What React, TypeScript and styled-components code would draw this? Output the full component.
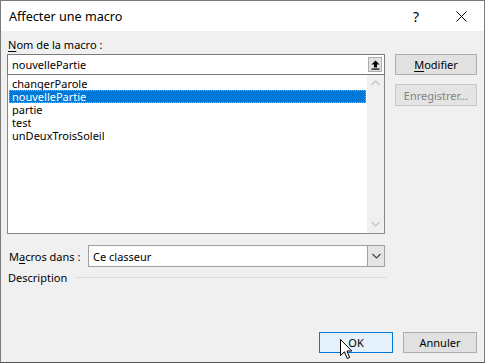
import React from "react";
import styled, { createGlobalStyle } from "styled-components";

const Global = createGlobalStyle`
  html, body { margin: 0; padding: 0; background: #f0f0f0; }
  body { font-family: "Noto Sans", "Open Sans", sans-serif; font-size: 11px; color: #000; }
  * { box-sizing: border-box; }
`;

const Window = styled.div`
  position: relative;
  width: 485px;
  height: 363px;
  border: 1px solid #7a7a7a;
  border-bottom-color: #555;
  background: #f0f0f0;
  display: flex;
  flex-direction: column;
  overflow: hidden;
`;

const TitleBar = styled.div`
  height: 30px;
  background: #fff;
  display: flex;
  align-items: center;
  padding-left: 8px;
  flex-shrink: 0;
`;

const Title = styled.div`
  flex: 1;
  font-size: 12.6px;
  padding-top: 1px;
`;

const TitleButton = styled.div<{ $w: number; $mr?: number }>`
  width: ${(p) => p.$w}px;
  margin-right: ${(p) => p.$mr ?? 0}px;
  height: 30px;
  display: flex;
  align-items: center;
  justify-content: center;
  font-size: 14px;
  color: #000;
`;

const Body = styled.div`
  flex: 1;
  display: flex;
  flex-direction: column;
  padding: 6px 7px 9px 6px;
`;

const Main = styled.div`
  display: flex;
  gap: 10px;
`;

const LeftCol = styled.div`
  width: 378px;
  display: flex;
  flex-direction: column;
`;

const RightCol = styled.div`
  width: 82px;
  display: flex;
  flex-direction: column;
  padding-top: 17px;
  gap: 9px;
`;

const Label = styled.div`
  height: 16px;
  line-height: 16px;
  margin-bottom: 1px;
  padding-left: 1px;
`;

const U = styled.span`
  text-decoration: underline;
  text-underline-offset: 2px;
  text-decoration-thickness: 1px;
`;

const NameField = styled.div`
  height: 21px;
  background: #fff;
  border: 1px solid #7a7a7a;
  display: flex;
  align-items: center;
  padding-left: 4px;
`;

const NameText = styled.div`
  flex: 1;
`;

const RefButton = styled.div`
  width: 14px;
  height: 15px;
  margin-right: 2px;
  background: #e1e1e1;
  border: 1px solid #adadad;
  display: flex;
  align-items: center;
  justify-content: center;
`;

const ListBox = styled.div`
  height: 159px;
  background: #fff;
  border: 1px solid #828790;
  border-top: none;
  display: flex;
`;

const ListItems = styled.div`
  flex: 1;
  padding-top: 2px;
  padding-left: 1px;
`;

const Item = styled.div<{ $sel?: boolean }>`
  height: 13px;
  padding-left: 3px;
  margin-right: 1px;
  background: ${(p) => (p.$sel ? "#0078d7" : "transparent")};
  color: ${(p) => (p.$sel ? "#fff" : "#000")};
  outline: ${(p) => (p.$sel ? "1px dotted #7fb7e8" : "none")};
  outline-offset: -1px;
`;

const ItemText = styled.span`
  display: inline-block;
  height: 13px;
  line-height: 13px;
  overflow: hidden;
  vertical-align: top;
`;

const ScrollBar = styled.div`
  width: 17px;
  background: #f0f0f0;
  display: flex;
  flex-direction: column;
  justify-content: space-between;
  align-items: center;
  padding: 5px 0 6px;
`;

const Button = styled.div<{ $disabled?: boolean; $default?: boolean }>`
  height: ${(p) => (p.$disabled ? 22 : 21)}px;
  display: flex;
  align-items: center;
  justify-content: center;
  background: ${(p) => (p.$default ? "#e5f1fb" : p.$disabled ? "#e4e4e4" : "#e1e1e1")};
  border: 1px solid ${(p) => (p.$default ? "#0078d7" : p.$disabled ? "#c8c8c8" : "#adadad")};
  color: ${(p) => (p.$disabled ? "#838383" : "#000")};
`;

const MacrosRow = styled.div`
  display: flex;
  align-items: center;
  margin-top: 11px;
  height: 22px;
`;

const MacrosLabel = styled.div`
  width: 81px;
  padding-left: 2px;
`;

const Select = styled.div`
  flex: 1;
  height: 22px;
  background: #fff;
  border: 1px solid #a0a0a0;
  display: flex;
  align-items: center;
  padding-left: 4px;
`;

const SelectText = styled.div`
  flex: 1;
`;

const DropButton = styled.div`
  width: 17px;
  height: 20px;
  background: #e5e5e5;
  border-left: 1px solid #a0a0a0;
  display: flex;
  align-items: center;
  justify-content: center;
`;

const DescRow = styled.div`
  display: flex;
  align-items: center;
  margin-top: 2px;
  height: 16px;
  padding-left: 1px;
  gap: 8px;
`;

const DescLine = styled.div`
  flex: 1;
  height: 1px;
  background: #dcdcdc;
  margin-right: -2px;
`;

const Footer = styled.div`
  margin-top: auto;
  display: flex;
  justify-content: flex-end;
  gap: 10px;
`;

const FooterButton = styled(Button)`
  width: 74px;
`;

const Cursor = styled.svg`
  position: absolute;
  left: 339px;
  top: 338px;
`;

const Chevron = ({ up, color }: { up?: boolean; color: string }) => (
  <svg width="9" height="6" viewBox="0 0 9 6">
    <polyline
      points={up ? "0.5,5 4.5,1 8.5,5" : "0.5,1 4.5,5 8.5,1"}
      fill="none"
      stroke={color}
      strokeWidth="1.1"
    />
  </svg>
);

export default function App() {
  const items = ["changerParole", "nouvellePartie", "partie", "test", "unDeuxTroisSoleil"];
  return (
    <>
      <Global />
      <Window>
        <TitleBar>
          <Title>Affecter une macro</Title>
          <TitleButton $w={24} $mr={10}>?</TitleButton>
          <TitleButton $w={46}>
            <svg width="11" height="11" viewBox="0 0 11 11">
              <path d="M0.5 0.5 L10.5 10.5 M10.5 0.5 L0.5 10.5" stroke="#000" strokeWidth="1" />
            </svg>
          </TitleButton>
        </TitleBar>
        <Body>
          <Main>
            <LeftCol>
              <Label>
                <U>N</U>om de la macro :
              </Label>
              <NameField>
                <NameText>nouvellePartie</NameText>
                <RefButton>
                  <svg width="9" height="10" viewBox="0 0 9 10">
                    <path d="M4.5 0.5 L8.5 4.5 L6 4.5 L6 7.5 L3 7.5 L3 4.5 L0.5 4.5 Z" fill="#000" />
                    <rect x="0.5" y="8.5" width="8" height="1.2" fill="#000" />
                  </svg>
                </RefButton>
              </NameField>
              <ListBox>
                <ListItems>
                  {items.map((it) => (
                    <Item key={it} $sel={it === "nouvellePartie"}>
                      <ItemText>{it}</ItemText>
                    </Item>
                  ))}
                </ListItems>
                <ScrollBar>
                  <Chevron up color="#c2c2c2" />
                  <Chevron color="#c2c2c2" />
                </ScrollBar>
              </ListBox>
              <MacrosRow>
                <MacrosLabel>
                  M<U>a</U>cros dans :
                </MacrosLabel>
                <Select>
                  <SelectText>Ce classeur</SelectText>
                  <DropButton>
                    <Chevron color="#404040" />
                  </DropButton>
                </Select>
              </MacrosRow>
              <DescRow>
                <span>Description</span>
                <DescLine />
              </DescRow>
            </LeftCol>
            <RightCol>
              <Button>
                <U>M</U>odifier
              </Button>
              <Button $disabled>Enregistrer...</Button>
            </RightCol>
          </Main>
          <Footer>
            <FooterButton $default>OK</FooterButton>
            <FooterButton>Annuler</FooterButton>
          </Footer>
        </Body>
        <Cursor width="13" height="22" viewBox="0 0 13 22">
          <path
            d="M0.5 0.5 L0.5 16.5 L4.5 12.8 L7.2 19.5 L9.6 18.5 L7 12 L11.8 12 Z"
            fill="#fff"
            stroke="#000"
            strokeWidth="1"
            strokeLinejoin="round"
          />
        </Cursor>
      </Window>
    </>
  );
}
